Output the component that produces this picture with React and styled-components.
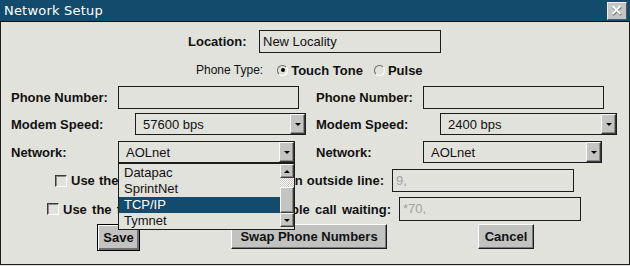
import styled, { createGlobalStyle } from 'styled-components';

const GlobalStyle = createGlobalStyle`
  html, body {
    margin: 0;
    padding: 0;
    background: #e2e2dd;
  }
  body {
    font-family: "Liberation Sans", Arial, sans-serif;
  }
`;

const Window = styled.div`
  width: 630px;
  height: 265px;
  box-sizing: border-box;
  border: 1px solid #1c1c1c;
  border-top: none;
  background: #e2e2dd;
  display: flex;
  flex-direction: column;
`;

const TitleBar = styled.div`
  height: 21px;
  background: #134b6d;
  border-bottom: 1px solid #101010;
  margin: 0 -1px;
  display: flex;
  align-items: center;
  justify-content: space-between;
  padding: 0 3px 0 4px;
`;

const Title = styled.span`
  color: #fff;
  font-family: "DejaVu Sans", sans-serif;
  font-size: 13px;
  letter-spacing: 0.2px;
`;

const CloseButton = styled.div`
  width: 18px;
  height: 16px;
  background: #c4c4c2;
  border: 1px solid;
  border-color: #eee #555 #555 #eee;
  display: flex;
  align-items: center;
  justify-content: center;
`;

const Row = styled.div`
  display: flex;
  align-items: center;
  height: ${(p) => p.$h}px;
  margin-top: ${(p) => p.$mt}px;
  padding-left: ${(p) => p.$pl || 0}px;
`;

const Split = styled.div`
  display: grid;
  grid-template-columns: 315px 314px;
  height: ${(p) => p.$h}px;
  margin-top: ${(p) => p.$mt}px;
`;

const Cell = styled.div`
  display: flex;
  align-items: center;
  padding-left: ${(p) => p.$pl || 0}px;
  position: relative;
`;

const Label = styled.span`
  font-weight: bold;
  font-size: 13px;
  color: #111;
  white-space: nowrap;
  width: ${(p) => (p.$w ? `${p.$w}px` : 'auto')};
  flex: none;
`;

const SpreadLabel = styled(Label)`
  text-align: justify;
  text-align-last: justify;
  overflow: hidden;
`;

const Plain = styled.span`
  font-size: 12px;
  color: #111;
  margin-right: 14px;
`;

const TextBox = styled.div`
  box-sizing: border-box;
  width: ${(p) => p.$w}px;
  height: ${(p) => p.$h || 23}px;
  border: 1px solid #1c1c1c;
  font-size: 13px;
  color: ${(p) => (p.$muted ? '#a3a3a0' : '#111')};
  padding: 2px 3px;
  line-height: 17px;
  flex: none;
  margin-left: ${(p) => p.$ml || 0}px;
`;

const SelectBox = styled.div`
  box-sizing: border-box;
  width: ${(p) => p.$w}px;
  height: ${(p) => p.$h || 22}px;
  border: 1px solid #1c1c1c;
  display: flex;
  align-items: stretch;
  font-size: 13px;
  color: #111;
  position: relative;
  flex: none;
`;

const SelectText = styled.span`
  flex: 1;
  padding-left: 7px;
  display: flex;
  align-items: center;
`;

const ArrowButton = styled.div`
  width: ${(p) => p.$w || 15}px;
  box-sizing: border-box;
  background: #c4c4c2;
  border: 1px solid;
  border-color: #fafafa #3a3a3a #3a3a3a #fafafa;
  box-shadow: inset -1px -1px 0 #8a8a88;
  display: flex;
  align-items: center;
  justify-content: center;
  flex: none;
`;

const DownTri = styled.span`
  width: 0;
  height: 0;
  border-left: 3px solid transparent;
  border-right: 3px solid transparent;
  border-top: 3px solid #000;
`;

const UpTri = styled.span`
  width: 0;
  height: 0;
  border-left: 3px solid transparent;
  border-right: 3px solid transparent;
  border-bottom: 3px solid #000;
`;

const ListBox = styled.div`
  position: absolute;
  left: -1px;
  top: 21px;
  width: 177px;
  height: 67px;
  box-sizing: border-box;
  border: 1px solid #1c1c1c;
  background: #e2e2dd;
  display: flex;
  z-index: 5;
`;

const Items = styled.div`
  flex: 1;
  display: flex;
  flex-direction: column;
  padding-top: 1px;
`;

const Item = styled.div`
  height: 16px;
  line-height: 16px;
  padding-left: 5px;
  font-size: 13px;
  color: ${(p) => (p.$active ? '#fff' : '#111')};
  background: ${(p) => (p.$active ? '#134b6d' : 'transparent')};
`;

const ScrollBar = styled.div`
  width: 14px;
  display: flex;
  flex-direction: column;
`;

const ScrollBtn = styled(ArrowButton)`
  width: 14px;
  height: 14px;
`;

const Track = styled.div`
  height: ${(p) => p.$h}px;
  background: repeating-conic-gradient(#ffffff 0 25%, #c4c4c2 0 50%) 0 0 / 2px 2px;
`;

const Thumb = styled.div`
  height: ${(p) => p.$h}px;
  box-sizing: border-box;
  background: #c4c4c2;
  border: 1px solid;
  border-color: #fafafa #3a3a3a #3a3a3a #fafafa;
  box-shadow: inset -1px -1px 0 #8a8a88;
`;

const Radio = styled.span`
  width: 11px;
  height: 11px;
  box-sizing: border-box;
  border-radius: 50%;
  border: 1px solid;
  border-color: #6a6a68 #fff #fff #6a6a68;
  background: #e2e2dd;
  display: inline-flex;
  align-items: center;
  justify-content: center;
  margin-right: 3px;
  flex: none;

  &::after {
    content: '';
    width: 4px;
    height: 4px;
    border-radius: 50%;
    background: ${(p) => (p.$on ? '#000' : 'transparent')};
  }
`;

const RadioLabel = styled.span`
  font-weight: bold;
  font-size: 13px;
  color: #111;
  margin-right: ${(p) => p.$mr || 0}px;
`;

const Check = styled.span`
  width: 12px;
  height: 12px;
  box-sizing: border-box;
  border: 1px solid;
  border-color: #3a3a3a #fff #fff #3a3a3a;
  box-shadow: inset 1px 1px 0 #8a8a88;
  flex: none;
  margin-right: ${(p) => p.$gap}px;
`;

const Button = styled.div`
  box-sizing: border-box;
  width: ${(p) => p.$w}px;
  height: ${(p) => (p.$default ? 27 : 25)}px;
  background: #c2c2c0;
  border: 1px solid;
  border-color: ${(p) => (p.$default ? '#000' : '#fff #1c1c1c #1c1c1c #fff')};
  box-shadow: ${(p) =>
    p.$default
      ? 'inset 1px 1px 0 #fff, inset -2px -2px 0 #6e6e6c'
      : 'inset -1px -1px 0 #7a7a78'};
  font-weight: bold;
  font-size: 13px;
  color: #111;
  display: flex;
  align-items: center;
  justify-content: center;
  flex: none;
`;

const Buttons = styled.div`
  display: flex;
  align-items: flex-start;
  margin-top: 3px;
  padding-left: 96px;
  gap: 91px;
`;

function Select({ value, width, open }) {
  return (
    <SelectBox $w={width}>
      <SelectText>{value}</SelectText>
      <ArrowButton>
        <DownTri />
      </ArrowButton>
      {open && (
        <ListBox>
          <Items>
            <Item>Datapac</Item>
            <Item>SprintNet</Item>
            <Item $active>TCP/IP</Item>
            <Item>Tymnet</Item>
          </Items>
          <ScrollBar>
            <ScrollBtn>
              <UpTri />
            </ScrollBtn>
            <Track $h={9} />
            <Thumb $h={26} />
            <ScrollBtn>
              <DownTri />
            </ScrollBtn>
          </ScrollBar>
        </ListBox>
      )}
    </SelectBox>
  );
}

export default function App() {
  return (
    <>
      <GlobalStyle />
      <Window>
        <TitleBar>
          <Title>Network Setup</Title>
          <CloseButton>
            <svg width="12" height="11" viewBox="0 0 12 11">
              <path d="M2 2 L10 10 M10 2 L2 10" stroke="#707070" strokeWidth="2.2" />
              <path d="M1.5 1 L9.5 9 M9.5 1 L1.5 9" stroke="#fff" strokeWidth="1.8" />
            </svg>
          </CloseButton>
        </TitleBar>

        <Row $h={23} $mt={8} $pl={187}>
          <Label $w={71}>Location:</Label>
          <TextBox $w={182}>New Locality</TextBox>
        </Row>

        <Row $h={20} $mt={7} $pl={195}>
          <Plain>Phone Type:</Plain>
          <Radio $on />
          <RadioLabel $mr={11}>Touch Tone</RadioLabel>
          <Radio />
          <RadioLabel>Pulse</RadioLabel>
        </Row>

        <Split $h={23} $mt={6}>
          <Cell $pl={10}>
            <Label $w={107}>Phone Number:</Label>
            <TextBox $w={181} />
          </Cell>
          <Cell>
            <Label $w={107}>Phone Number:</Label>
            <TextBox $w={181} />
          </Cell>
        </Split>

        <Split $h={22} $mt={4}>
          <Cell $pl={10}>
            <Label $w={124}>Modem Speed:</Label>
            <Select value="57600 bps" width={171} />
          </Cell>
          <Cell>
            <Label $w={124}>Modem Speed:</Label>
            <Select value="2400 bps" width={177} />
          </Cell>
        </Split>

        <Split $h={22} $mt={6}>
          <Cell $pl={10}>
            <Label $w={107}>Network:</Label>
            <Select value="AOLnet" width={177} open />
          </Cell>
          <Cell>
            <Label $w={107}>Network:</Label>
            <Select value="AOLnet" width={179} />
          </Cell>
        </Split>

        <Row $h={23} $mt={6} $pl={54}>
          <Check $gap={4} />
          <SpreadLabel $w={313}>Use the following prefix to access an outside line:</SpreadLabel>
          <TextBox $w={182} $ml={8} $muted>
            9,
          </TextBox>
        </Row>

        <Row $h={24} $mt={5} $pl={46}>
          <Check $gap={4} />
          <SpreadLabel $w={328}>Use the following dial prefix to disable call waiting:</SpreadLabel>
          <TextBox $w={182} $ml={8} $h={24} $muted>
            *70,
          </TextBox>
        </Row>

        <Buttons>
          <Button $w={43} $default>
            Save
          </Button>
          <Button $w={156}>Swap Phone Numbers</Button>
          <Button $w={56}>Cancel</Button>
        </Buttons>
      </Window>
    </>
  );
}
